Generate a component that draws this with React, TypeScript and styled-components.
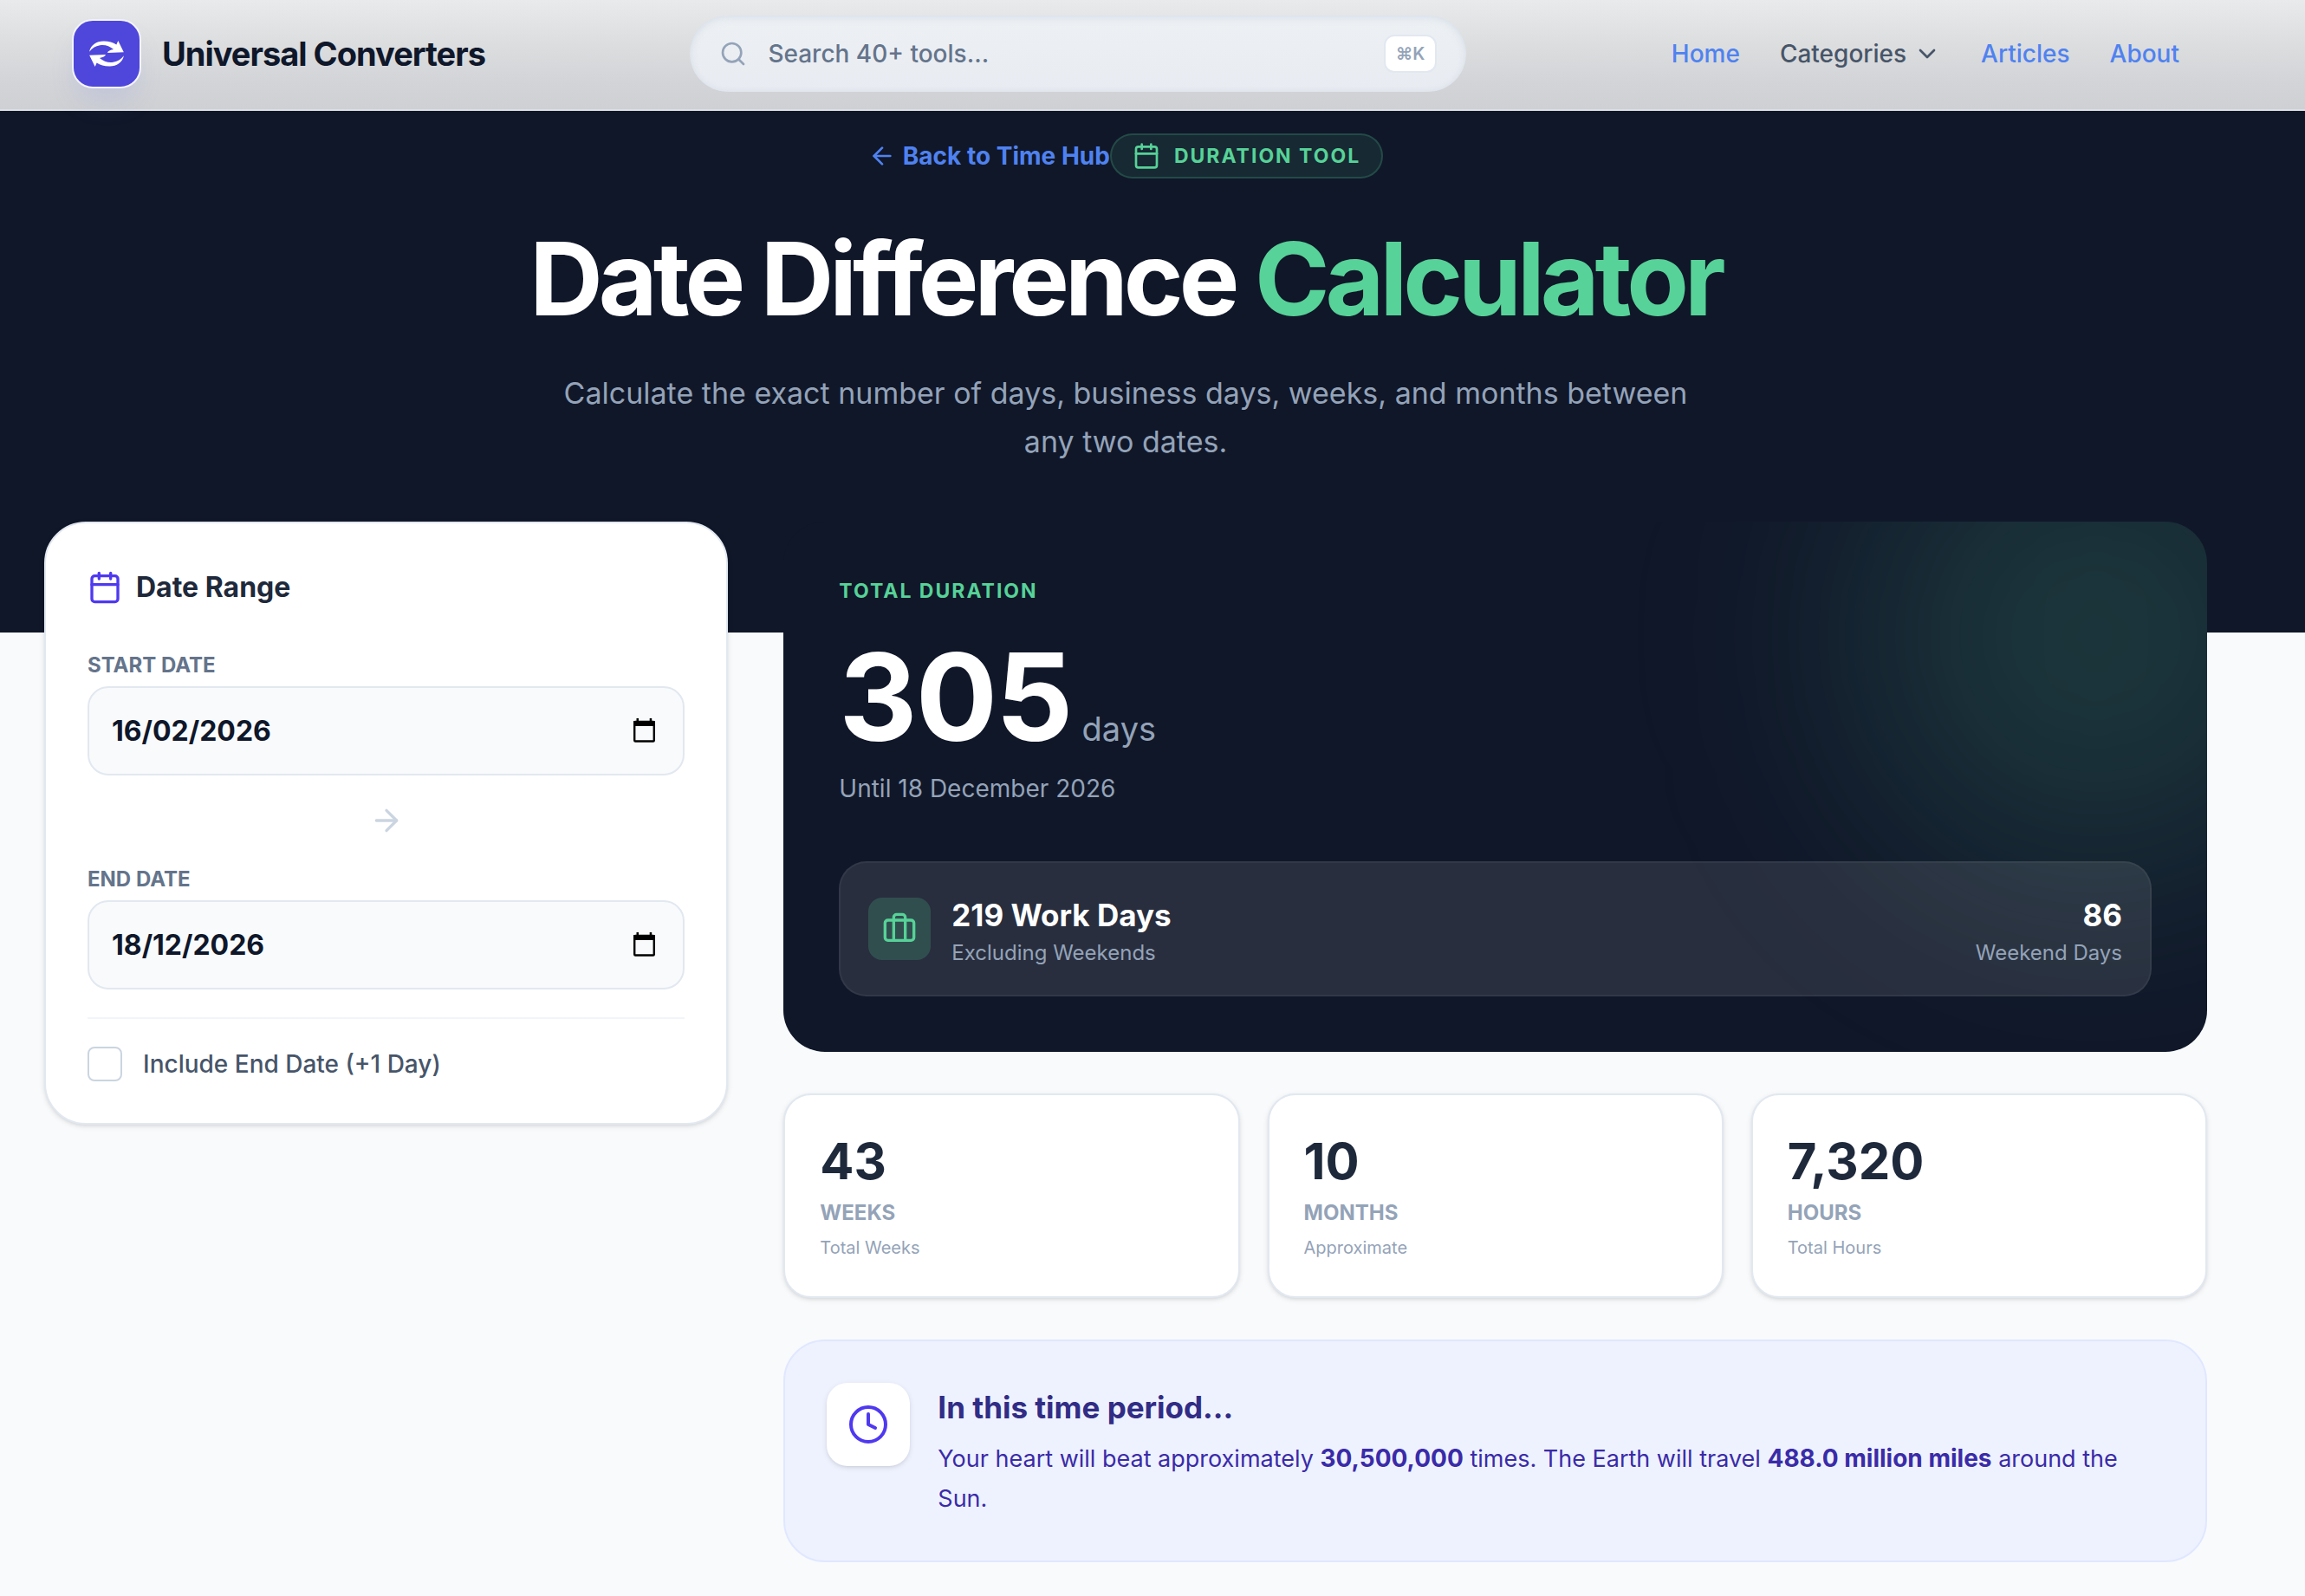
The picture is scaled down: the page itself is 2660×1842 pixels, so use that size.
import React, { useState } from 'react';
import styled, { createGlobalStyle } from 'styled-components';
import { ArrowLeft, ArrowRight, Briefcase, Calendar, ChevronDown, Clock, Search } from 'lucide-react';

const color = {
  navy: '#101729',
  page: '#f8fafc',
  line: '#e2e8f0',
  ink: '#0f172a',
  heading: '#1e293b',
  body: '#475569',
  label: '#64748b',
  muted: '#94a3b8',
  link: '#4f82f0',
  green: '#57d298',
  indigo: '#4f39f0',
};

const GlobalStyle = createGlobalStyle`
  *, *::before, *::after { box-sizing: border-box; }
  body {
    margin: 0;
    background: ${color.page};
    color: ${color.ink};
    font-family: Inter, "Liberation Sans", sans-serif;
    font-size: 28px;
    line-height: 40px;
    -webkit-font-smoothing: antialiased;
  }
  h1, h2, p { margin: 0; }
  a { color: ${color.link}; text-decoration: none; }
  button, input, kbd { font-family: inherit; }
  svg { display: block; flex-shrink: 0; }
`;

const Band = styled.div`
  padding-right: 62px;
`;

const Container = styled.div`
  max-width: 2560px;
  margin: 0 auto;
  padding: 0 32px;
`;

const Header = styled.header`
  position: relative;
  z-index: 1;
  background: linear-gradient(#e9eaec 0%, #dddedf 38%, #d3d4d8 75%, #cfd0d3 100%);
  border-bottom: 2px solid #dcdfe3;
  box-shadow: 0 2px 4px rgba(0, 0, 0, 0.06);
`;

const Bar = styled.div`
  display: flex;
  align-items: center;
  justify-content: space-between;
  gap: 32px;
  padding: 18px 32px 20px;
`;

const Brand = styled.a`
  display: flex;
  align-items: center;
  gap: 24px;
  color: ${color.ink};
  font-size: 38px;
  font-weight: 700;
  letter-spacing: -1px;
  white-space: nowrap;
`;

const LogoTile = styled.span`
  display: grid;
  place-items: center;
  width: 80px;
  height: 80px;
  border: 2px solid #f3f4fb;
  border-radius: 24px;
  background: #4f46db;
  box-shadow: 0 20px 30px -6px rgba(120, 140, 225, 0.18);
`;

const SearchBox = styled.label`
  display: flex;
  align-items: center;
  gap: 24px;
  flex: 0 1 896px;
  height: 88px;
  padding: 0 34px;
  border-radius: 44px;
  background: linear-gradient(#edf1f4, #e8ebf1);
  box-shadow: inset 0 4px 8px rgba(200, 210, 225, 0.3), inset 0 0 6px rgba(200, 210, 225, 0.4);
  color: ${color.muted};
`;

const SearchInput = styled.input`
  flex: 1;
  min-width: 0;
  padding: 0;
  border: 0;
  outline: 0;
  background: transparent;
  color: ${color.label};
  font-size: 28px;
  font-weight: 500;
  &::placeholder { color: ${color.label}; opacity: 1; }
`;

const Key = styled.kbd`
  padding: 4px 12px;
  border: 2px solid ${color.line};
  border-radius: 12px;
  background: #fff;
  color: ${color.muted};
  font-size: 20px;
  font-weight: 600;
  line-height: 32px;
`;

const Nav = styled.nav`
  display: flex;
  align-items: center;
  gap: 46px;
  font-weight: 500;
`;

const NavButton = styled.button`
  display: flex;
  align-items: center;
  gap: 8px;
  padding: 0;
  border: 0;
  background: none;
  color: ${color.body};
  font-size: 28px;
  font-weight: 500;
  line-height: 40px;
`;

const Hero = styled(Band)`
  background: ${color.navy};
  padding-top: 26px;
  padding-bottom: 192px;
  text-align: center;
`;

const HeroTop = styled.div`
  display: flex;
  align-items: center;
  justify-content: center;
`;

const BackLink = styled.a`
  display: flex;
  align-items: center;
  gap: 8px;
  font-weight: 700;
`;

const Pill = styled.span`
  display: flex;
  align-items: center;
  gap: 16px;
  padding: 8px 24px;
  border: 2px solid rgba(87, 210, 152, 0.2);
  border-radius: 26px;
  background: rgba(87, 210, 152, 0.1);
  color: ${color.green};
  font-size: 23px;
  font-weight: 700;
  letter-spacing: 2px;
  line-height: 32px;
`;

const Title = styled.h1`
  margin-top: 56px;
  color: #fff;
  font-size: 117px;
  font-weight: 700;
  letter-spacing: -5px;
  line-height: 120px;
  span { color: ${color.green}; }
`;

const Lead = styled.p`
  max-width: 1344px;
  margin: 44px auto 0;
  color: ${color.muted};
  font-size: 34px;
  line-height: 56px;
`;

const Columns = styled(Container).attrs({ as: 'main' })`
  display: grid;
  grid-template-columns: repeat(12, minmax(0, 1fr));
  gap: 64px;
  align-items: start;
  position: relative;
  margin-top: -128px;
  padding-bottom: 40px;
`;

const RangeCard = styled.section`
  grid-column: span 4;
  padding: 48px;
  border: 2px solid ${color.line};
  border-radius: 48px;
  background: #fff;
  box-shadow: 0 2px 6px rgba(0, 0, 0, 0.1), 0 2px 4px -2px rgba(0, 0, 0, 0.1);
`;

const RangeTitle = styled.h2`
  display: flex;
  align-items: center;
  gap: 16px;
  margin-bottom: 48px;
  color: ${color.heading};
  font-size: 32px;
  font-weight: 700;
  line-height: 52px;
  svg { color: ${color.indigo}; }
`;

const FieldLabel = styled.label`
  display: block;
  margin-bottom: 8px;
  color: ${color.label};
  font-size: 24px;
  font-weight: 700;
  line-height: 32px;
`;

const Field = styled.div`
  display: flex;
  align-items: center;
  height: 103px;
  padding: 0 26px;
  border: 2px solid ${color.line};
  border-radius: 24px;
  background: ${color.page};
`;

const DateInput = styled.input`
  flex: 1;
  min-width: 0;
  padding: 0;
  border: 0;
  outline: 0;
  background: transparent;
  color: ${color.ink};
  font-size: 32px;
  font-weight: 700;
`;

const PickerButton = styled.button`
  display: block;
  padding: 2px 6px 4px;
  border: 0;
  background: none;
  color: #000;
`;

const Between = styled.div`
  display: flex;
  justify-content: center;
  padding: 32px 0;
  color: #cbd5e1;
`;

const CheckRow = styled.label`
  display: flex;
  align-items: center;
  gap: 24px;
  margin-top: 32px;
  padding-top: 32px;
  border-top: 2px solid #f1f5f9;
  color: ${color.body};
  font-weight: 500;
`;

const Tick = styled.input`
  appearance: none;
  width: 40px;
  height: 40px;
  margin: 0;
  border: 2px solid #cbd5e1;
  border-radius: 8px;
  background: #fff;
  &:checked { background: ${color.indigo}; border-color: ${color.indigo}; }
`;

const Results = styled.div`
  grid-column: span 8;
  display: grid;
  gap: 48px;
`;

const Total = styled.section`
  position: relative;
  overflow: hidden;
  padding: 64px;
  border-radius: 48px;
  background: ${color.navy};
  color: ${color.muted};
`;

const Glow = styled.div`
  position: absolute;
  top: -148px;
  right: -152px;
  width: 560px;
  height: 560px;
  border-radius: 50%;
  background: rgba(87, 210, 152, 0.17);
  filter: blur(128px);
`;

const TotalLabel = styled.h2`
  color: ${color.green};
  font-size: 23px;
  font-weight: 700;
  letter-spacing: 2px;
  line-height: 32px;
`;

const TotalValue = styled.p`
  display: flex;
  align-items: baseline;
  gap: 12px;
  margin: 34px 0 14px;
  font-size: 38px;
  line-height: 40px;
  strong {
    color: #fff;
    font-size: 140px;
    font-weight: 700;
    letter-spacing: -2px;
    line-height: 144px;
  }
`;

const Split = styled.div`
  position: relative;
  display: flex;
  align-items: center;
  gap: 24px;
  margin-top: 64px;
  padding: 32px;
  border: 2px solid rgba(255, 255, 255, 0.05);
  border-radius: 32px;
  background: rgba(255, 255, 255, 0.1);
`;

const SplitIcon = styled.span`
  display: grid;
  place-items: center;
  width: 72px;
  height: 72px;
  border-radius: 16px;
  background: rgba(87, 210, 152, 0.2);
  color: ${color.green};
`;

const SplitText = styled.div<{ $end?: boolean }>`
  margin-left: ${(p) => (p.$end ? 'auto' : '0')};
  text-align: ${(p) => (p.$end ? 'right' : 'left')};
  font-size: 24px;
  line-height: 32px;
  strong {
    display: block;
    color: #fff;
    font-size: 35px;
    font-weight: 700;
    line-height: 56px;
  }
`;

const Stats = styled.div`
  display: grid;
  grid-template-columns: repeat(3, minmax(0, 1fr));
  gap: 32px;
`;

const StatCard = styled.section`
  display: grid;
  gap: 8px;
  padding: 40px;
  border: 2px solid ${color.line};
  border-radius: 32px;
  background: #fff;
  color: ${color.muted};
  box-shadow: 0 2px 6px rgba(0, 0, 0, 0.1), 0 2px 4px -2px rgba(0, 0, 0, 0.1);
`;

const StatValue = styled.p`
  color: ${color.heading};
  font-size: 58px;
  font-weight: 700;
  line-height: 72px;
`;

const StatName = styled.h2`
  font-size: 24px;
  font-weight: 700;
  line-height: 32px;
`;

const StatNote = styled.p`
  font-size: 20px;
  line-height: 32px;
`;

const Fact = styled.section`
  display: flex;
  align-items: flex-start;
  gap: 32px;
  padding: 48px;
  border: 2px solid #e0e7ff;
  border-radius: 48px;
  background: #eef2ff;
`;

const FactIcon = styled.span`
  display: grid;
  place-items: center;
  flex-shrink: 0;
  width: 96px;
  height: 96px;
  border-radius: 24px;
  background: #fff;
  color: ${color.indigo};
  box-shadow: 0 2px 6px rgba(0, 0, 0, 0.1), 0 2px 4px -2px rgba(0, 0, 0, 0.1);
`;

const FactTitle = styled.h2`
  margin-bottom: 8px;
  color: #312c85;
  font-size: 35px;
  font-weight: 700;
  line-height: 56px;
`;

const FactBody = styled.p`
  color: #3a2ba8;
  font-size: 27px;
  line-height: 46px;
  strong { font-size: 28px; font-weight: 700; }
`;

const arrow =
  'M0 13C1.500 5 8.500.6 16.500.5 22.500.4 27.500 1.800 31.700 4.600L33.700 0 40.300 13.500 21.200 14.200C21.600 12.200 24.600 10.800 28.400 10.200 23.800 6.300 18 4.400 12.500 5.400 7 6.200 3.200 9 0 13Z';

function LogoMark() {
  return (
    <svg width="40" height="30" viewBox="0 0 40.4 30.4" fill="#fff" aria-hidden="true">
      <path d={arrow} />
      <path d={arrow} transform="rotate(180 20.2 15.2)" />
    </svg>
  );
}

function PickerGlyph() {
  return (
    <svg width="25" height="28" viewBox="0 0 25 28" fill="none" aria-hidden="true">
      <path d="M3.500 0h2.500v3h-2.500zM18.700 0h2.500v3h-2.500zM0 3h25v6H0z" fill="currentColor" />
      <rect x="1.200" y="4" width="22.600" height="22.500" rx="1" stroke="currentColor" strokeWidth="2.400" />
    </svg>
  );
}

function DateField({ id, label, initial }: { id: string; label: string; initial: string }) {
  const [value, setValue] = useState(initial);
  return (
    <div>
      <FieldLabel htmlFor={id}>{label}</FieldLabel>
      <Field>
        <DateInput id={id} type="text" value={value} onChange={(e) => setValue(e.target.value)} />
        <PickerButton type="button" aria-label={`Pick ${label.toLowerCase()}`}>
          <PickerGlyph />
        </PickerButton>
      </Field>
    </div>
  );
}

const stats = [
  { value: '43', name: 'WEEKS', note: 'Total Weeks' },
  { value: '10', name: 'MONTHS', note: 'Approximate' },
  { value: '7,320', name: 'HOURS', note: 'Total Hours' },
];

export default function App() {
  return (
    <>
      <GlobalStyle />
      <Header>
        <Band>
          <Container>
            <Bar>
              <Brand href="#">
                <LogoTile>
                  <LogoMark />
                </LogoTile>
                Universal Converters
              </Brand>
              <SearchBox>
                <Search size={32} />
                <SearchInput type="text" placeholder="Search 40+ tools..." aria-label="Search tools" />
                <Key>⌘K</Key>
              </SearchBox>
              <Nav>
                <a href="#">Home</a>
                <NavButton type="button">
                  Categories
                  <ChevronDown size={32} />
                </NavButton>
                <a href="#">Articles</a>
                <a href="#">About</a>
              </Nav>
            </Bar>
          </Container>
        </Band>
      </Header>

      <Hero as="section">
        <Container>
          <HeroTop>
            <BackLink href="#">
              <ArrowLeft size={32} />
              Back to Time Hub
            </BackLink>
            <Pill>
              <Calendar size={32} />
              DURATION TOOL
            </Pill>
          </HeroTop>
          <Title>
            Date Difference <span>Calculator</span>
          </Title>
          <Lead>
            Calculate the exact number of days, business days, weeks, and months between any two dates.
          </Lead>
        </Container>
      </Hero>

      <Band>
        <Columns>
          <RangeCard>
            <RangeTitle>
              <Calendar size={40} />
              Date Range
            </RangeTitle>
            <DateField id="start" label="START DATE" initial="16/02/2026" />
            <Between>
              <ArrowRight size={40} />
            </Between>
            <DateField id="end" label="END DATE" initial="18/12/2026" />
            <CheckRow>
              <Tick type="checkbox" />
              Include End Date (+1 Day)
            </CheckRow>
          </RangeCard>

          <Results>
            <Total>
              <Glow />
              <TotalLabel>TOTAL DURATION</TotalLabel>
              <TotalValue>
                <strong>305</strong>
                days
              </TotalValue>
              <p>Until 18 December 2026</p>
              <Split>
                <SplitIcon>
                  <Briefcase size={40} />
                </SplitIcon>
                <SplitText>
                  <strong>219 Work Days</strong>
                  Excluding Weekends
                </SplitText>
                <SplitText $end>
                  <strong>86</strong>
                  Weekend Days
                </SplitText>
              </Split>
            </Total>

            <Stats>
              {stats.map((s) => (
                <StatCard key={s.name}>
                  <StatValue>{s.value}</StatValue>
                  <StatName>{s.name}</StatName>
                  <StatNote>{s.note}</StatNote>
                </StatCard>
              ))}
            </Stats>

            <Fact>
              <FactIcon>
                <Clock size={48} />
              </FactIcon>
              <div>
                <FactTitle>In this time period...</FactTitle>
                <FactBody>
                  Your heart will beat approximately <strong>30,500,000</strong> times. The Earth will travel{' '}
                  <strong>488.0 million miles</strong> around the Sun.
                </FactBody>
              </div>
            </Fact>
          </Results>
        </Columns>
      </Band>
    </>
  );
}
